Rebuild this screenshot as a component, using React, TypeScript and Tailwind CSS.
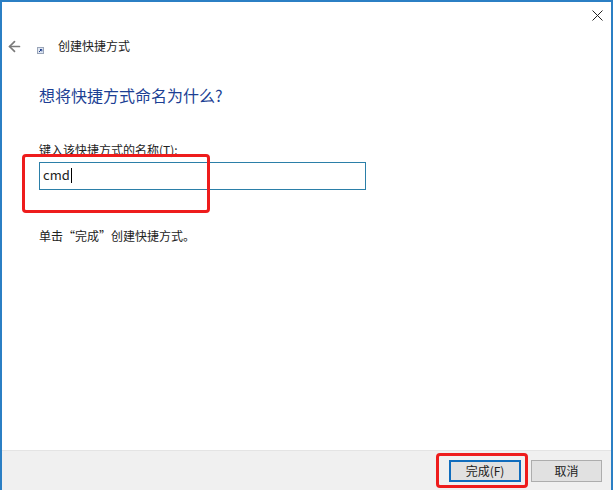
import { ArrowLeft } from "lucide-react";

const font = { fontFamily: '"Noto Sans CJK SC", "Liberation Sans", sans-serif' };

export default function App() {
  return (
    <div className="h-[490px] w-[615px] bg-white">
      <div
        className="relative flex h-[490px] w-[613px] flex-col overflow-hidden border-x-2 border-t-2 border-[#2b7fc4] bg-white text-[12px] text-[#222]"
        style={font}
      >
        {/* Close button row */}
        <div className="flex h-[24px] items-start justify-end pr-[8px] pt-[8px]">
          <svg width="11" height="11" viewBox="0 0 11 11" stroke="#222" strokeWidth="1">
            <path d="M.5.5l10 10M10.5.5l-10 10" />
          </svg>
        </div>

        {/* Header */}
        <div className="flex h-[40px] items-center">
          <ArrowLeft size={17} className="ml-[4px] text-[#7a7a7a]" strokeWidth={2.4} />
          <svg className="ml-[14px] mt-[8px]" width="7" height="7" viewBox="0 0 7 7">
            <rect x="0.5" y="0.5" width="6" height="6" fill="#dfe6f2" stroke="#9aa5b8" />
            <path d="M2 5l2-2M3 2.5h1.8v1.8" fill="none" stroke="#1f3f8c" />
          </svg>
          <span className="ml-[14px] leading-none">创建快捷方式</span>
        </div>

        {/* Body */}
        <div className="flex flex-1 flex-col pl-[37px]">
          <h1 className="mt-[18px] text-[16px] font-normal leading-[22px] text-[#1c3f94]">
            想将快捷方式命名为什么?
          </h1>
          <label className="mt-[35px] leading-[18px]">键入该快捷方式的名称(T):</label>
          <div className="mt-[3px] flex h-[28px] w-[327px] items-center border border-[#2b7fa8] pb-[2px] pl-[3px] text-[13px]">
            cmd
            <span className="ml-px h-[15px] w-px bg-black" />
          </div>
          <p className="mt-[37px] leading-[18px]">单击“完成”创建快捷方式。</p>
        </div>

        {/* Footer */}
        <div className="flex h-[40px] items-center justify-end gap-[10px] border-t border-[#e4e4e4] bg-[#f0f0f0] pr-[9px]">
          <button className="h-[22px] w-[72px] border-2 border-[#0f6cbd] bg-[#e1e1e1] text-[12px] leading-none text-[#222]">
            完成(F)
          </button>
          <button className="h-[22px] w-[71px] border border-[#adadad] bg-[#e1e1e1] text-[12px] leading-none text-[#222]">
            取消
          </button>
        </div>

        {/* Red annotation boxes drawn over the dialog */}
        <div className="absolute left-[20px] top-[152px] h-[59px] w-[188px] rounded-[4px] border-[3px] border-[#ee1c1c]" />
        <div className="absolute left-[434px] top-[451px] h-[35px] w-[92px] rounded-[4px] border-[3px] border-[#ee1c1c]" />
      </div>
    </div>
  );
}
